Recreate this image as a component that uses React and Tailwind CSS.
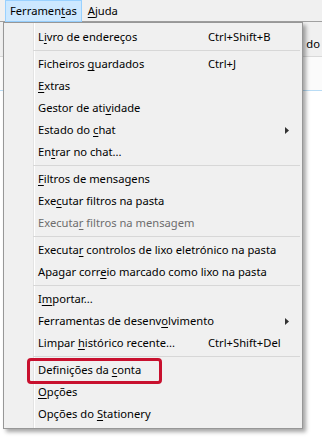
import React from "react";

const U = ({ children }) => (
  <span className="underline decoration-1 underline-offset-[2px]">{children}</span>
);

const Arrow = () => (
  <svg width="4" height="7" viewBox="0 0 4 7" className="block">
    <path d="M0 0 L4 3.5 L0 7 Z" fill="#333" />
  </svg>
);

const Item = ({ children, shortcut, sub, disabled }) => (
  <div
    className={
      "h-[22px] flex items-center pl-[34px] " +
      (disabled ? "text-[#6d6d6d]" : "text-black")
    }
  >
    <div className="w-[170px] shrink-0 whitespace-nowrap">{children}</div>
    {shortcut && <div className="whitespace-nowrap">{shortcut}</div>}
    {sub && (
      <div className="ml-auto mr-[13px]">
        <Arrow />
      </div>
    )}
  </div>
);

const Sep = () => (
  <div className="h-[5px] flex items-center ml-[29px] mr-[2px]">
    <div className="h-px w-full bg-[#d7d7d7]" />
  </div>
);

export default function App() {
  return (
    <div
      className="relative w-[322px] h-[440px] bg-white overflow-hidden text-[11.2px] leading-none"
      style={{ fontFamily: '"Noto Sans", "Open Sans", sans-serif' }}
    >
      {/* menubar */}
      <div className="h-[22px] bg-[#f0f0f0] border-b border-[#a0a0a0] flex items-stretch pl-[5px]">
        <div className="bg-[#cce8ff] border border-[#99d1ff] px-[4px] flex items-center h-[22px]">
          Ferramen<U>t</U>as
        </div>
        <div className="px-[6px] flex items-center">
          <U>A</U>juda
        </div>
      </div>
      {/* underlying window content */}
      <div className="h-[35px] bg-[#f0f0f0] border-b border-[#d9d9d9] flex items-center justify-end pr-[2px]">
        <span className="mt-[10px]">do</span>
      </div>
      <div className="h-[34px] bg-[#fbfbfb] border-b border-[#b9dcf5]" />

      {/* menu */}
      <div className="absolute left-[3px] top-[22px] w-[300px] bg-[#f0f0f0] border border-[#979797] py-[3px] shadow-[3px_3px_4px_rgba(0,0,0,0.35)]">
        <div className="absolute left-[29px] top-0 bottom-0 w-px bg-[#e3e3e3]" />
        <div className="absolute left-[30px] top-0 bottom-0 w-px bg-white" />
        <div className="relative">
          <Item shortcut="Ctrl+Shift+B">
            L<U>i</U>vro de endereços
          </Item>
          <Sep />
          <Item shortcut="Ctrl+J">
            Ficheiros <U>g</U>uardados
          </Item>
          <Item>
            <U>E</U>xtras
          </Item>
          <Item>
            Gestor de ati<U>v</U>idade
          </Item>
          <Item sub>
            Estado do <U>c</U>hat
          </Item>
          <Item>
            En<U>t</U>rar no chat...
          </Item>
          <Sep />
          <Item>
            <U>F</U>iltros de mensagens
          </Item>
          <Item>
            Exe<U>c</U>utar filtros na pasta
          </Item>
          <Item disabled>
            Executa<U>r</U> filtros na mensagem
          </Item>
          <Sep />
          <Item>
            Executa<U>r</U> controlos de lixo eletrónico na pasta
          </Item>
          <Item>
            Apagar corr<U>e</U>io marcado como lixo na pasta
          </Item>
          <Sep />
          <Item>
            I<U>m</U>portar...
          </Item>
          <Item sub>
            Ferramentas de desenv<U>o</U>lvimento
          </Item>
          <Item shortcut="Ctrl+Shift+Del">
            Limpar <U>h</U>istórico recente...
          </Item>
          <Sep />
          <div className="relative">
            <Item>
              Definições da <U>c</U>onta
            </Item>
            <div className="absolute left-[23px] top-[-1px] w-[135px] h-[26px] border-[3px] border-[#c8102e] rounded-[4px]" />
          </div>
          <Item>
            <U>O</U>pções
          </Item>
          <Item>
            Opções do <U>S</U>tationery
          </Item>
        </div>
      </div>
    </div>
  );
}
